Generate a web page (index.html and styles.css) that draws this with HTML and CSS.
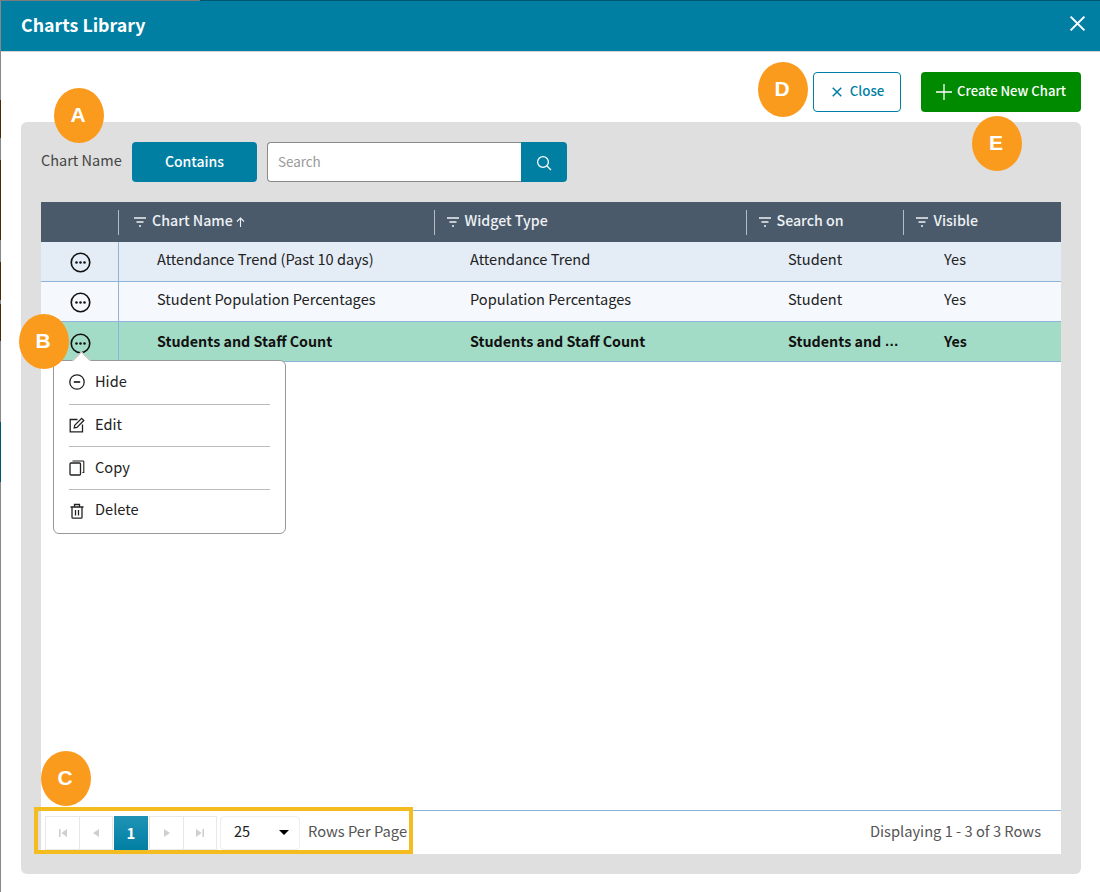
FILE: index.html
```html
<!DOCTYPE html>
<html lang="en">
<head>
<meta charset="utf-8">
<title>Charts Library</title>
<link rel="stylesheet" href="styles.css">
</head>
<body>
<svg class="defs" width="0" height="0" aria-hidden="true">
  <symbol id="filter" viewBox="0 0 12 12"><path d="M0 2h12M2.5 6h7M5 10h2" fill="none" stroke="currentColor" stroke-width="1.3"/></symbol>
  <symbol id="more" viewBox="0 0 22 22"><circle cx="11" cy="11" r="9.7" fill="none" stroke="currentColor" stroke-width="1.7"/><circle cx="6.8" cy="11" r="1.35" fill="currentColor"/><circle cx="11" cy="11" r="1.35" fill="currentColor"/><circle cx="15.2" cy="11" r="1.35" fill="currentColor"/></symbol>
</svg>
<div class="modal">
  <header class="modal-head">
    <h1 class="modal-title">Charts Library</h1>
    <svg class="head-x" viewBox="0 0 16 16" width="17" height="17"><path d="M1.5 1.5l13 13M14.5 1.5l-13 13" fill="none" stroke="currentColor" stroke-width="1.9"/></svg>
  </header>
  <div class="actions">
    <button class="btn btn-close">
      <svg viewBox="0 0 10 10" width="10" height="10"><path d="M.7.7l8.6 8.6M9.3.7L.7 9.3" fill="none" stroke="currentColor" stroke-width="1.5"/></svg>
      <span class="btn-text">Close</span>
    </button>
    <button class="btn btn-create">
      <svg viewBox="0 0 16 16" width="16" height="16"><path d="M8 0v16M0 8h16" fill="none" stroke="currentColor" stroke-width="1.3"/></svg>
      <span class="btn-text">Create New Chart</span>
    </button>
  </div>
  <section class="panel">
    <div class="filter-row">
      <span class="filter-label">Chart Name</span>
      <button class="contains">Contains</button>
      <div class="search">
        <span class="search-input">Search</span>
        <span class="search-btn">
          <svg viewBox="0 0 16 16" width="16" height="16"><circle cx="7" cy="7" r="5.4" fill="none" stroke="currentColor" stroke-width="1.3"/><path d="M11 11l4 4" fill="none" stroke="currentColor" stroke-width="1.3"/></svg>
        </span>
      </div>
    </div>
    <div class="table">
      <div class="thead">
        <div class="th"></div>
        <div class="th sep first"><svg class="fi"><use href="#filter"/></svg>Chart Name<svg class="arrow" viewBox="0 0 9 10" width="9" height="10"><path d="M4.5 10V1M1 4.5l3.5-3.5L8 4.5" fill="none" stroke="currentColor" stroke-width="1.1"/></svg></div>
        <div class="th sep"><svg class="fi"><use href="#filter"/></svg>Widget Type</div>
        <div class="th sep"><svg class="fi"><use href="#filter"/></svg>Search on</div>
        <div class="th sep"><svg class="fi"><use href="#filter"/></svg>Visible</div>
      </div>
      <div class="row row-a">
        <div class="td td-menu"><svg class="more"><use href="#more"/></svg></div>
        <div class="td">Attendance Trend (Past 10 days)</div>
        <div class="td">Attendance Trend</div>
        <div class="td">Student</div>
        <div class="td">Yes</div>
      </div>
      <div class="row row-b">
        <div class="td td-menu"><svg class="more"><use href="#more"/></svg></div>
        <div class="td">Student Population Percentages</div>
        <div class="td">Population Percentages</div>
        <div class="td">Student</div>
        <div class="td">Yes</div>
      </div>
      <div class="row row-sel">
        <div class="td td-menu"><svg class="more"><use href="#more"/></svg></div>
        <div class="td">Students and Staff Count</div>
        <div class="td">Students and Staff Count</div>
        <div class="td">Students and&nbsp;<span class="ell">…</span></div>
        <div class="td">Yes</div>
      </div>
      <div class="table-foot">
        <div class="pager">
          <div class="pg-group">
            <span class="pg"><svg viewBox="0 0 10 10" width="10" height="10"><path d="M1 1h1.6v8H1zM9 1v8L3.4 5z"/></svg></span>
            <span class="pg"><svg viewBox="0 0 10 10" width="10" height="10"><path d="M8 1v8L2 5z"/></svg></span>
          </div>
          <span class="pg-current">1</span>
          <div class="pg-group">
            <span class="pg"><svg viewBox="0 0 10 10" width="10" height="10"><path d="M2 1v8l6-4z"/></svg></span>
            <span class="pg"><svg viewBox="0 0 10 10" width="10" height="10"><path d="M9 1H7.4v8H9zM1 1v8l5.6-4z"/></svg></span>
          </div>
          <div class="pg-size"><span class="pg-num">25</span><i class="caret"></i></div>
          <span class="pg-label">Rows Per Page</span>
        </div>
        <span class="pg-count">Displaying 1 - 3 of 3 Rows</span>
      </div>
    </div>
  </section>

  <div class="menu">
    <div class="menu-item">
      <svg viewBox="0 0 16 16" width="16" height="16"><circle cx="8" cy="8" r="7.2" fill="none" stroke="currentColor" stroke-width="1.3"/><path d="M4.8 8h6.4" stroke="currentColor" stroke-width="1.7"/></svg><span class="menu-text">Hide</span>
    </div>
    <div class="menu-item">
      <svg viewBox="0 0 16 16" width="16" height="16"><path d="M8.5 2.5H1.2v12.3h12.3V7.5" fill="none" stroke="currentColor" stroke-width="1.3"/><path d="M5.2 11l.5-2.8L12.6 1.3l2.2 2.2-6.9 6.9z" fill="none" stroke="currentColor" stroke-width="1.3"/></svg><span class="menu-text">Edit</span>
    </div>
    <div class="menu-item">
      <svg viewBox="0 0 16 16" width="16" height="16"><rect x="1" y="3" width="10.5" height="12" rx="1" fill="none" stroke="currentColor" stroke-width="1.3"/><path d="M3.5 1h10.7a.6.6 0 0 1 .6.6V12.5h-1.4" fill="none" stroke="currentColor" stroke-width="1.1"/></svg><span class="menu-text">Copy</span>
    </div>
    <div class="menu-item">
      <svg viewBox="0 0 16 16" width="16" height="16"><path d="M1.5 4h13M5.5 4V1.5h5V4M3 4v10.2a1 1 0 0 0 1 1h8a1 1 0 0 0 1-1V4M6.5 7v5.5M9.5 7v5.5" fill="none" stroke="currentColor" stroke-width="1.3"/></svg><span class="menu-text">Delete</span>
    </div>
  </div>

  <span class="pager-mark"></span>
  <span class="badge badge-a">A</span>
  <span class="badge badge-b">B</span>
  <span class="badge badge-c">C</span>
  <span class="badge badge-d">D</span>
  <span class="badge badge-e">E</span>
</div>
</body>
</html>
```

FILE: styles.css
```css
* { box-sizing: border-box; }

html, body { height: 100%; }

body {
  margin: 0;
  overflow: hidden;
  padding: 1px 0 0 1px;
  font-family: "Noto Sans CJK SC", "Noto Sans CJK JP", "Noto Sans", sans-serif;
  font-size: 14.6px;
  color: #222;
  background:
    linear-gradient(to right, #7c7c7c 0 200px, #00566e 200px) top left / 100% 1px no-repeat,
    linear-gradient(to bottom,
      #888 0 100px, #4a2a08 100px 138px, #888 138px 160px, #4a2a08 160px 240px,
      #888 240px 262px, #4a2a08 262px 300px, #888 300px 304px, #4a2a08 304px 341px,
      #888 341px 422px, #00566e 422px 482px, #888 482px) top left / 1px 100% no-repeat,
    #fff;
}

.defs { position: absolute; }

.modal {
  position: relative;
  height: 891px;
  background: #fff;
}

.modal-head {
  height: 51px;
  padding: 0 14px 1px 20px;
  display: flex;
  align-items: center;
  justify-content: space-between;
  background: #007fa3;
  border-bottom: 1px solid #d5d5d5;
  color: #fff;
}

.modal-title {
  margin: -3px 0 0;
  font-size: 17.8px;
  font-weight: 700;
}

.head-x { margin-top: -5px; }

.actions {
  display: flex;
  justify-content: flex-end;
  gap: 20px;
  padding: 20px 19px 10px 0;
}

.btn {
  height: 40px;
  border-radius: 4px;
  font: inherit;
  font-size: 13.3px;
  font-weight: 500;
  display: flex;
  align-items: center;
  justify-content: center;
  padding: 0;
}

.btn-text { margin-top: -4px; }

.btn-close {
  width: 88px;
  gap: 8px;
  padding-left: 2px;
  background: #fff;
  border: 1px solid #007fa3;
  color: #007fa3;
}

.btn-create {
  width: 160px;
  gap: 5px;
  background: #008a00;
  border: 0;
  color: #fff;
  font-size: 13.1px;
}

.panel {
  margin: 0 19px 0 20px;
  height: 752px;
  padding: 20px;
  display: flex;
  flex-direction: column;
  gap: 20px;
  background: #dfdfdf;
  border-radius: 6px;
}

.filter-row {
  display: flex;
  align-items: center;
  height: 40px;
}

.filter-label {
  width: 91px;
  margin-top: -6px;
  font-size: 14.5px;
  color: #444;
  white-space: nowrap;
}

.contains {
  width: 125px;
  height: 40px;
  border: 0;
  border-radius: 4px;
  background: #007fa3;
  color: #fff;
  font: inherit;
  font-size: 14px;
  font-weight: 500;
  padding: 0 0 3px;
}

.search {
  margin-left: 10px;
  width: 300px;
  height: 40px;
  display: flex;
}

.search-input {
  flex: 1;
  display: flex;
  align-items: center;
  padding: 0 0 3px 10px;
  background: #fff;
  border: 1px solid #8a8a8a;
  border-right: 0;
  border-radius: 4px 0 0 4px;
  color: #999;
  font-size: 13.4px;
}

.search-btn {
  width: 46px;
  padding-top: 1px;
  display: flex;
  align-items: center;
  justify-content: center;
  background: #007fa3;
  border-radius: 0 4px 4px 0;
  color: #fff;
}

.table {
  flex: 1;
  display: flex;
  flex-direction: column;
  background: #fff;
}

.thead, .row {
  display: grid;
  grid-template-columns: 77px 316px 312px 157px 158px;
}

.thead {
  height: 40px;
  background: #4a5a6b;
  color: #eef1f4;
  font-size: 14.2px;
  font-weight: 500;
}

.th {
  display: flex;
  align-items: center;
  padding-bottom: 4px;
  white-space: pre;
}

.th.sep { position: relative; padding-left: 13px; }
.th.first { padding-left: 16px; }

.th.sep::before {
  content: "";
  position: absolute;
  left: 0;
  top: 8px;
  bottom: 7px;
  width: 1px;
  background: #b5bcc4;
}

.fi { width: 12px; height: 12px; margin-right: 5.5px; margin-top: 4px; flex: none; }
.first .fi { margin-right: 6px; }

.arrow { margin: 3px 0 0 3px; }

.row {
  height: 40px;
  border-bottom: 1px solid #8fb3d9;
  color: #222;
}

.row-a { background: #e4ecf6; }
.row-b { background: #f5f9fd; }
.row-sel {
  background: #a2dcc6;
  font-size: 14.3px;
  font-weight: 700;
  color: #111;
}

.td {
  display: flex;
  align-items: center;
  padding: 0 2px 6px 39px;
  white-space: nowrap;
  min-width: 0;
}

.row-sel .td { padding-bottom: 2px; }

.row .td:nth-child(3) { padding-left: 36px; }
.row .td:nth-child(4) { padding-left: 42px; }
.row .td:nth-child(5) { padding-left: 41px; }

.row .td-menu {
  padding: 1px 0 0 29px;
  border-right: 1px solid #8fb3d9;
  margin-right: -1px;
  color: #111;
}

.row-sel .td-menu { padding-top: 3px; padding-bottom: 0; }

.more { width: 21px; height: 21px; }

.ell { font-family: "Liberation Sans", sans-serif; font-weight: 700; }

.table-foot {
  margin-top: auto;
  height: 44px;
  border-top: 1px solid #8fb3d9;
  display: flex;
  align-items: center;
  justify-content: space-between;
  padding: 0 20px 0 4px;
}

.pager {
  display: flex;
  align-items: center;
  height: 34px;
}

.pg-group {
  display: flex;
  height: 34px;
  border: 1px solid #e8e8e8;
}

.pg {
  width: 33px;
  display: flex;
  align-items: center;
  justify-content: center;
  fill: #cfcfcf;
}

.pg + .pg { border-left: 1px solid #e8e8e8; }

.pg-current {
  width: 34px;
  height: 34px;
  margin: 0 1px;
  display: flex;
  align-items: center;
  justify-content: center;
  background: linear-gradient(#2093b5, #007fa3);
  color: #fff;
  font-weight: 700;
  font-size: 15px;
}

.pg-size {
  width: 80px;
  height: 34px;
  margin-left: 3px;
  padding: 0 10px 0 13px;
  display: flex;
  align-items: center;
  justify-content: space-between;
  border: 1px solid #eee;
  border-radius: 4px;
  font-size: 14.5px;
}

.pg-num { margin-top: -4px; }

.caret {
  width: 0;
  height: 0;
  border: 5px solid transparent;
  border-top: 5px solid #000;
  border-bottom: 0;
}

.pg-label { margin: -4px 0 0 8px; font-size: 14.7px; color: #555; }
.pg-count { margin-top: -4px; font-size: 14.7px; color: #555; }

.menu {
  position: absolute;
  left: 52px;
  top: 359px;
  width: 233px;
  height: 174px;
  padding: 0 15px;
  display: flex;
  flex-direction: column;
  background: #fff;
  border: 1px solid #999;
  border-radius: 6px;
  color: #222;
}

.menu::before {
  content: "";
  position: absolute;
  left: 21px;
  top: -7px;
  width: 12px;
  height: 12px;
  background: #fff;
  border-left: 1px solid #bbb;
  border-top: 1px solid #bbb;
  transform: rotate(45deg);
}

.menu-item {
  position: relative;
  height: 42.67px;
  flex: none;
  display: flex;
  align-items: center;
  gap: 10px;
}

.menu-text { margin-top: -4px; }

.menu-item + .menu-item { border-top: 1px solid #bbb; }

.pager-mark {
  position: absolute;
  left: 33px;
  top: 806px;
  width: 379px;
  height: 47px;
  border: 4px solid #f5bc20;
}

.badge {
  position: absolute;
  width: 50px;
  height: 55px;
  display: flex;
  align-items: center;
  justify-content: center;
  padding: 0 2px 2px 0;
  border-radius: 50%;
  background: #fb9b1e;
  color: #fff;
  font-family: "Liberation Sans", sans-serif;
  font-weight: 700;
  font-size: 21px;
}

.badge-a { left: 53px; top: 87px; }
.badge-b { left: 18px; top: 313px; }
.badge-c { left: 40px; top: 750px; }
.badge-d { left: 757px; top: 61px; }
.badge-e { left: 971px; top: 115px; }
```
